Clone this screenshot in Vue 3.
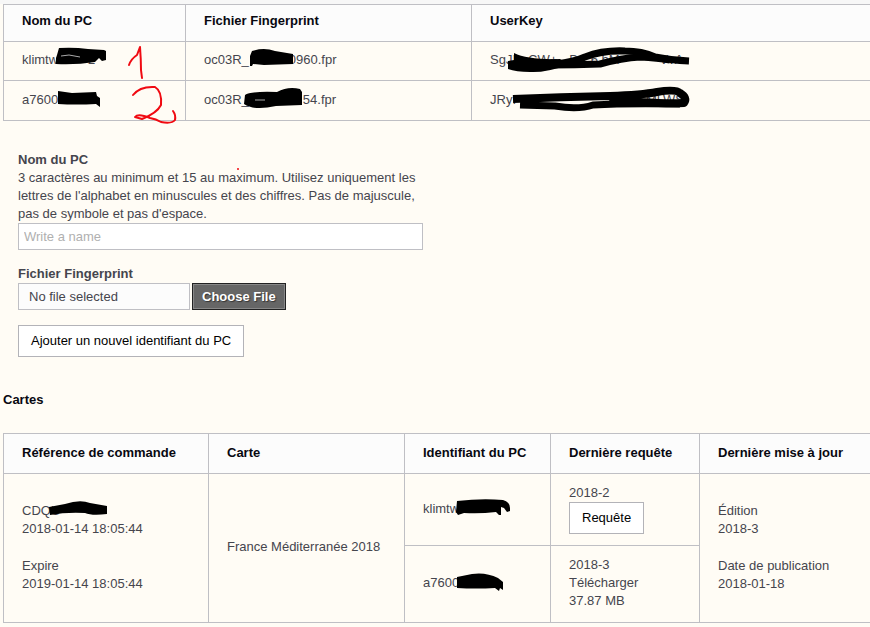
<script setup>
import { ref } from 'vue'

const pcName = ref('')
const fileName = ref('')

function onFile(event) {
  const file = event.target.files[0]
  fileName.value = file ? file.name : ''
}
</script>

<template>
  <main class="page">
    <section class="computers">
      <table class="grid">
        <colgroup>
          <col class="w-name" />
          <col class="w-file" />
          <col />
        </colgroup>
        <thead>
          <tr>
            <th scope="col">Nom du PC</th>
            <th scope="col">Fichier Fingerprint</th>
            <th scope="col">UserKey</th>
          </tr>
        </thead>
        <tbody>
          <tr class="short">
            <td>klimtw<span class="gap gap-m"></span>2</td>
            <td>oc03R_<span class="gap"></span>0960.fpr</td>
            <td>SgJI<span class="gap gap-s"></span>CW+<span class="gap gap-s"></span>D<span class="gap gap-s"></span>6 hM<span class="gap"></span>VvA</td>
          </tr>
          <tr>
            <td>a7600</td>
            <td>oc03R_<span class="gap gap-l"></span>54.fpr</td>
            <td>JRyI<span class="gap gap-xl"></span>MLWS</td>
          </tr>
        </tbody>
      </table>
    </section>

    <form class="add" @submit.prevent>
      <div class="field">
        <label for="pc-name">Nom du PC</label>
        <p id="pc-help">
          3 caractères au minimum et 15 au maximum. Utilisez uniquement les lettres de l'alphabet en
          minuscules et des chiffres. Pas de majuscule, pas de symbole et pas d'espace.
        </p>
        <input
          id="pc-name"
          v-model="pcName"
          class="text"
          type="text"
          placeholder="Write a name"
          aria-describedby="pc-help"
        />
      </div>
      <div class="field">
        <label for="pc-file">Fichier Fingerprint</label>
        <label class="picker" for="pc-file">
          <span class="filename">{{ fileName || 'No file selected' }}</span>
          <span class="choose">Choose File</span>
        </label>
        <input id="pc-file" class="file" type="file" accept=".fpr" @change="onFile" />
      </div>
      <button class="btn" type="submit">Ajouter un nouvel identifiant du PC</button>
    </form>

    <section class="maps">
      <h2>Cartes</h2>
      <table class="grid tall">
        <colgroup>
          <col class="w-order" />
          <col class="w-map" />
          <col class="w-id" />
          <col class="w-request" />
          <col />
        </colgroup>
        <thead>
          <tr>
            <th scope="col">Référence de commande</th>
            <th scope="col">Carte</th>
            <th scope="col">Identifiant du PC</th>
            <th scope="col">Dernière requête</th>
            <th scope="col">Dernière mise à jour</th>
          </tr>
        </thead>
        <tbody>
          <tr class="first">
            <td rowspan="2">
              <p>CDQU<br />2018-01-14 18:05:44</p>
              <p>Expire<br />2019-01-14 18:05:44</p>
            </td>
            <td rowspan="2">France Méditerranée 2018</td>
            <td>klimtw</td>
            <td>2018-2<br /><button class="btn" type="button">Requête</button></td>
            <td rowspan="2">
              <p>Édition<br />2018-3</p>
              <p>Date de publication<br />2018-01-18</p>
            </td>
          </tr>
          <tr class="second">
            <td>a7600</td>
            <td>2018-3<br />Télécharger<br />37.87 MB</td>
          </tr>
        </tbody>
      </table>
    </section>

    <svg class="marks" width="870" height="627" viewBox="0 0 870 627" aria-hidden="true">
      <g fill="#000">
        <path d="M59 48Q74 47 88 49L104 50L106 51V60L102 61L99 58L95 62Q76 65 56 64V58L57 55Z" />
        <path d="M58 91L72 93L96 92L97 96L100 98V107L96 104Q76 105 58 104Z" />
        <path d="M252 51Q264 47 275 51L293 54V64L264 65L253 64L252 66H250V56Z" />
        <path d="M245 95Q250 91 277 92Q288 86 300 89L302 92V105L276 106Q254 111 244 104Z" />
        <path d="M457 501Q482 498 503 500Q510 502 510 508V511L507 512L504 508L501 507V515H499L496 512Q480 514 464 513L458 515L456 512Z" />
        <path d="M457 577L472 574Q486 572 498 578L503 582V590L500 588L499 591L495 588Q476 589 457 588Z" />
        <path d="M49 507L65 504Q80 499 90 503L107 506V514Q92 516 85 513Q66 512 50 515Z" />
        <path d="M514 53Q528 60 560 59L568 65Q545 73 530 72Q516 72 508 69V61L514 60Z" />
      </g>
      <g fill="none" stroke="#000" stroke-linejoin="round">
        <path stroke-width="7" d="M556 64Q574 62 585 57Q603 50 625 51Q642 51 655 57Q670 60 689 61" />
        <path stroke-width="7" d="M550 65Q575 65 600 64Q622 58 640 57Q658 58 670 60" />
        <path stroke-width="8" d="M513 99Q560 97 610 96Q642 95 657 92Q676 89 680 93Q688 98 684 103Q670 104 640 102Q620 99 610 97" />
        <path stroke-width="7" d="M520 105L555 106Q578 110 593 105Q625 103 680 104" />
      </g>
      <path d="M61 56L69 55L80 57M255 100L265 100" stroke="#aaa" fill="none" />
      <g fill="none" stroke="#f00a12" stroke-width="2" stroke-linecap="round" stroke-linejoin="round">
        <path d="M129 65Q131 59 137 55L140 47Q141 60 141 70L142 78" />
        <path d="M133 95Q140 86 155 87Q162 91 161 105Q157 113 142 119L135 117Q138 113 150 118Q156 119 161 122Q172 124 175 120Q176 115 173 111" />
      </g>
      <circle cx="238" cy="169" r="1" fill="#f00a12" />
    </svg>
  </main>
</template>

<style>
body {
  margin: 0;
  background: #fffcf5;
}
</style>

<style scoped>
.page {
  position: relative;
  overflow: hidden;
  border-top: 4px solid #f7f7f7;
  color: #45454d;
  font: 13px/18px "Liberation Sans", Arial, sans-serif;
}
.computers,
.maps {
  padding-left: 3px;
}
.grid {
  width: 100%;
  table-layout: fixed;
  border-collapse: separate;
  border-spacing: 0;
  border: solid #bfbfc4;
  border-width: 1px 0 0 1px;
}
.grid th,
.grid td {
  box-sizing: border-box;
  padding: 0 18px;
  border: solid #bfbfc4;
  border-width: 0 1px 1px 0;
  text-align: left;
  vertical-align: middle;
}
.grid th:last-child,
.grid tr:not(.second) td:last-child {
  border-right: 0;
  padding-right: 0;
}
.grid th {
  height: 37px;
  padding-bottom: 4px;
  background: #fcfcfc;
  color: #080810;
}
.grid td {
  height: 40px;
  padding-bottom: 2px;
}
.grid .short td { height: 39px; }
.w-name { width: 182px; }
.w-file { width: 286px; }
.w-order { width: 205px; }
.w-map { width: 196px; }
.w-id { width: 146px; }
.w-request { width: 149px; }
.tall th { height: 40px; padding-bottom: 2px; }
.tall .first td { height: 72px; }
.tall .second td { height: 77px; }
.gap { display: inline-block; width: 40px; }
.gap-s { width: 12px; }
.gap-m { width: 30px; }
.gap-l { width: 54px; }
.gap-xl { width: 130px; }
.add {
  display: flex;
  flex-direction: column;
  align-items: flex-start;
  gap: 15px;
  max-width: 405px;
  padding: 30px 18px 0;
}
.field {
  display: flex;
  flex-direction: column;
  align-self: stretch;
}
.field > label:first-child {
  font-weight: bold;
}
p {
  margin: 0;
}
td p + p {
  margin-top: 19px;
}
.text {
  box-sizing: border-box;
  width: 100%;
  height: 27px;
  padding: 0 5px;
  border: 1px solid #bfbfc4;
  background: #fff;
  color: #45454d;
  font: inherit;
}
.text::placeholder {
  color: #b0b0b0;
}
.picker {
  display: flex;
  gap: 2px;
  line-height: 25px;
}
.filename {
  box-sizing: border-box;
  width: 172px;
  padding: 0 10px;
  border: 1px solid #bfbfc4;
  background: #fcfcfc;
}
.choose {
  border: 1px solid #222;
  box-shadow: inset 0 0 0 1px #888;
  padding: 0 9px;
  background: #666;
  color: #fff;
  font-weight: bold;
  text-shadow: 1px 1px 1px #333;
}
.file {
  position: absolute;
  width: 1px;
  height: 1px;
  opacity: 0;
}
.btn {
  height: 32px;
  padding: 0 12px;
  border: 1px solid #b3b3b8;
  background: #fff;
  color: #000;
  font: inherit;
}
h2 {
  margin: 34px 0 24px;
  color: #080810;
  font-size: 13px;
  line-height: 18px;
}
.marks {
  position: absolute;
  top: -4px;
  left: 0;
  pointer-events: none;
}
</style>
